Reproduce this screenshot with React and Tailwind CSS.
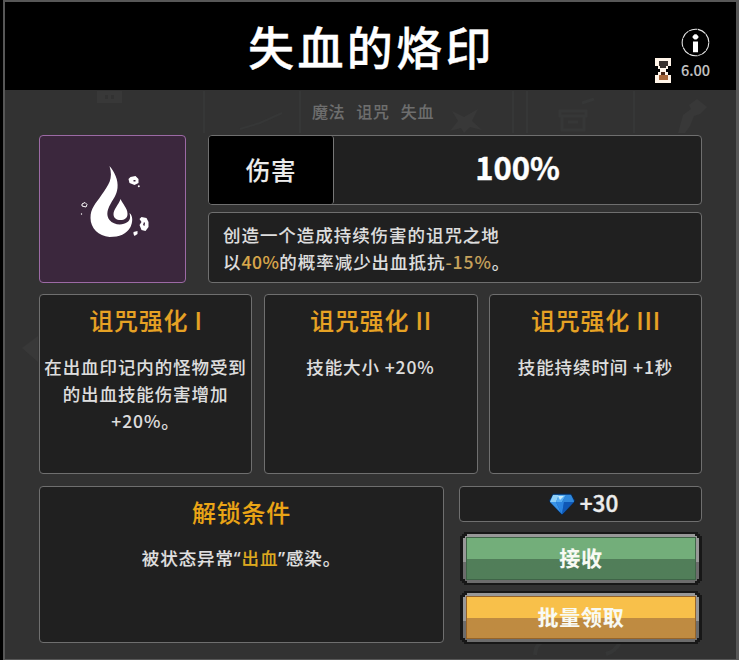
import React from "react";

const box = "rounded-[4px] border border-[#6f6f6f] bg-[#202020]";

function Ghosts() {
  return (
    <svg className="absolute inset-0 h-full w-full" viewBox="0 0 739 660" fill="none">
      <g fill="#383838">
        <path fillRule="evenodd" d="M97 91h25v12H97zM105 95v4h3v-4zM111 95v4h3v-4z" />
        <path d="M22 348l16-12v26z" />
        <path d="M450 131l8-10-6-10 12 6 14-8-6 12 10 9-12-3-6 6-3-5z" />
        <path d="M678 133l5-18 8-6-2-4 8-6 10 8-7 7-6 2-4 10-5 7z" />
      </g>
      <g stroke="#363737" strokeWidth="2">
        <path d="M204 91v42M300 91v42M513 91v42M527 91v42M634 91v42" />
        <path d="M240 129l20-6 22-10" />
        <path d="M560 111h26v5h-26zM562 116v14h22v-14M568 122h10M582 103l12-4" strokeWidth="3" />
        <path d="M535 655c1-8 2-10 6-12M620 642c-4 8-8 10-14 12" strokeWidth="4" />
      </g>
    </svg>
  );
}

function InfoIcon() {
  return (
    <svg width="29" height="29" viewBox="0 0 30 30">
      <circle cx="15" cy="15" r="13.8" fill="none" stroke="#e8e8e8" strokeWidth="1.1" strokeDasharray="9 .6" />
      <path d="M14 6.500h2l2 2v1.500l-2 2h-2l-2-2V8.500zM12.400 14h5.200v11h-5.200z" fill="#fff" />
    </svg>
  );
}

function Hourglass() {
  return (
    <svg width="16" height="25" viewBox="0 0 16 25" shapeRendering="crispEdges">
      <path d="M0 0h16v8h-3v3h-2v3h2v3h3v8H0v-8h3v-3h2v-3H3V8H0z" fill="#fff4e8" />
      <path d="M4 3h9v5H4zM5 8h6v2H5z" fill="#39302c" />
      <path d="M6 16h4v1h3v5H4v-5h2z" fill="#a9683a" />
      <path d="M6 14h4v3H6z" fill="#4a2818" />
    </svg>
  );
}

function FlameIcon() {
  return (
    <svg width="146" height="146" viewBox="39.5 135 146 146" fill="#fff">
      <path d="M109 165C114 171 118 179 117 187C116 194 114 196 110 203C106 210 106 215 109 219C113 224 122 225 127 221C130 219 130 216 129 212C133 215 132 222 130 226C126 233 119 236 109 236C98 235 90 227 90 217C90 207 95 203 101 194C108 184 113 178 109 165Z" />
      <path d="M120 198C122 203 127 207 127 213C127 217 124 219 120 219C116 219 113 217 113 213C113 208 118 204 120 198Z" />
      <path fillRule="evenodd" d="M130 176l5-1 3 3v4l-4 2-5-2-1-4zM133 179v1.500h2v-1.500z" />
      <circle cx="138.3" cy="185.300" r="1" />
      <path fillRule="evenodd" d="M141 216l5 1 2 4v5l-3 4-4-1-2-5 2-3-2-3zM143.500 221l-1 3 1.500 1 .5-3z" />
      <path d="M133 231l4-1v3l-3 2-1-2z" />
      <path d="M81.500 203l3-1.500 2 2-1 2.500-4-1z" fill="none" stroke="#fff" />
      <circle cx="81" cy="213" r=".7" />
    </svg>
  );
}

function Gem() {
  return (
    <svg width="28" height="23" viewBox="0 0 28 23">
      <path d="M5 1h18l4 7-13 14L1 8z" fill="#1668c4" stroke="#0b2748" />
      <path d="M5 2h6L8 9H2z" fill="#8fd0f8" />
      <path d="M11 2h7l-4 7H8z" fill="#58aff4" />
      <path d="M10 3h6l-4 4z" fill="#c3eafd" />
      <path d="M18 2h5l3 7H14z" fill="#3189dc" />
      <path d="M2 9h6l5 11z" fill="#3a94e8" />
      <path d="M8 9h8l-2 12z" fill="#2b84e0" />
      <path d="M16 9h10L14 21z" fill="#0f57b5" />
    </svg>
  );
}

const notch4 =
  "[clip-path:polygon(4px_0,calc(100%-4px)_0,calc(100%-4px)_2px,calc(100%-2px)_2px,calc(100%-2px)_4px,100%_4px,100%_calc(100%-4px),calc(100%-2px)_calc(100%-4px),calc(100%-2px)_calc(100%-2px),calc(100%-4px)_calc(100%-2px),calc(100%-4px)_100%,4px_100%,4px_calc(100%-2px),2px_calc(100%-2px),2px_calc(100%-4px),0_calc(100%-4px),0_4px,2px_4px,2px_2px,4px_2px)]";

function PixelButton({ label, edge, fill }) {
  return (
    <button className={`block h-[53px] w-[242px] bg-[#171717] px-[3px] py-[2px] ${notch4}`}>
      <span className={`block h-[49px] bg-linear-to-b from-[#989898] from-57% to-[#6c6c6c] to-57% px-[3px] py-[3px] ${notch4}`}>
        <span className={`block h-[43px] p-px ${edge}`}>
          <span className={`flex h-[41px] items-center justify-center pb-[2px] text-[21px] font-bold leading-none tracking-[0.8px] text-[#f8faf4] ${fill}`}>
            {label}
          </span>
        </span>
      </span>
    </button>
  );
}

function Upgrade({ title, children }) {
  return (
    <section className={`${box} h-[180px] text-center`}>
      <h2 className="mt-[10px] pl-px text-[24px] font-medium leading-[30px] tracking-[0.8px] text-[#e6a224]">{title}</h2>
      <p className="mt-[18px] whitespace-nowrap text-[17.5px] font-medium leading-[27px] tracking-[0.9px] text-[#dedede]">
        {children}
      </p>
    </section>
  );
}

export default function App() {
  return (
    <div
      className="relative h-[660px] w-[739px] overflow-hidden bg-black pl-[3px] font-['Noto_Sans_CJK_SC',sans-serif] [-webkit-text-stroke:0.1px_currentColor]"
      lang="zh-CN"
    >
      <div className="h-[660px] w-[736px] border-2 border-b-1 border-r-3 border-[#575757] bg-[#323232]">
        <Ghosts />
        <div className="relative">
          <header className="flex h-[88px] justify-end bg-black">
            <h1 className="mt-[14px] w-[246px] whitespace-nowrap text-[46px] font-medium leading-[58px] tracking-[3.4px] text-white [-webkit-text-stroke:0.4px_currentColor]">
              失血的烙印
            </h1>
            <div className="ml-[161px] mr-[26px] flex w-[55px] flex-col items-end pt-[26px]">
              <InfoIcon />
              <div className="mt-px flex w-[55px] items-start justify-between">
                <Hourglass />
                <span className="text-[14.500px] font-medium leading-[24px] text-[#c4c4c4]">6.00</span>
              </div>
            </div>
          </header>

          <div className="flex h-[45px] justify-center gap-[11px] pl-[5px] pt-[10px] text-[16px] font-medium leading-[22px] tracking-[0.7px] text-[#6e6e6e]">
            <span>魔法</span>
            <span>诅咒</span>
            <span>失血</span>
          </div>

          <main className="ml-[34px] w-[663px]">
            <div className="flex justify-between">
              <div className="h-[148px] w-[147px] rounded-[4px] border border-[#9c6aa5] bg-[#3b273d]">
                <FlameIcon />
              </div>
              <div className="w-[494px]">
                <div className={`${box} flex h-[70px]`}>
                  <div className="w-[125px] rounded-[3px] border-r border-[#777] bg-black pt-[18px] text-center text-[24.500px] font-medium leading-[32px] tracking-[0.8px] text-[#ececec]">
                    伤害
                  </div>
                  <div className="flex-1 pt-[13px] text-center text-[31px] font-bold leading-[36px] text-white [-webkit-text-stroke:0.4px_currentColor]">
                    100%
                  </div>
                </div>
                <div className={`${box} mt-[7px] h-[71px] pl-[14px] pt-[8px] text-[17.5px] font-medium leading-[27px] tracking-[0.95px] text-[#dedede]`}>
                  <p className="whitespace-nowrap">创造一个造成持续伤害的诅咒之地</p>
                  <p className="whitespace-nowrap">
                    以<span className="tracking-[0.5px] text-[#d9a74b]">40%</span>的概率减少出血抵抗
                    <span className="text-[#c6a25c]">-15%</span>。
                  </p>
                </div>
              </div>
            </div>

            <div className="mt-[11px] grid grid-cols-[213px_214px_213px] justify-between">
              <Upgrade title="诅咒强化 I">
                在出血印记内的怪物受到
                <br />
                的出血技能伤害增加
                <br />
                +20%。
              </Upgrade>
              <Upgrade title="诅咒强化 II">技能大小 +20%</Upgrade>
              <Upgrade title="诅咒强化 III">技能持续时间 +1秒</Upgrade>
            </div>

            <div className="mt-[12px] flex justify-between">
              <section className={`${box} h-[157px] w-[405px] text-center`}>
                <h2 className="mt-[9px] text-[24px] font-medium leading-[32px] tracking-[0.8px] text-[#eaa516]">解锁条件</h2>
                <p className="mt-[16px] text-[17.5px] font-medium leading-[27px] tracking-[0.9px] text-[#e0e0e0]">
                  被状态异常<span className="font-['Noto_Sans']">“</span>
                  <span className="text-[#dda91f]">出血</span>
                  <span className="font-['Noto_Sans']">”</span>感染。
                </p>
              </section>
              <div className="w-[243px]">
                <div className={`${box} flex h-[36px] items-center justify-center gap-[4px] pl-[5px]`}>
                  <Gem />
                  <span className="-mt-[4px] text-[22.500px] font-medium leading-[30px] text-[#ececec] [-webkit-text-stroke:0.4px_currentColor]">
                    +30
                  </span>
                </div>
                <div className="ml-px mt-[10px] flex flex-col gap-[6px]">
                  <PixelButton
                    label="接收"
                    edge="bg-[#3f6447]"
                    fill="bg-linear-to-b from-[#73ae7a] from-50% to-[#517e59] to-50%"
                  />
                  <PixelButton
                    label="批量领取"
                    edge="bg-[#966429]"
                    fill="bg-linear-to-b from-[#f8c04a] from-50% to-[#bf8b41] to-50%"
                  />
                </div>
              </div>
            </div>
          </main>
        </div>
      </div>
    </div>
  );
}
